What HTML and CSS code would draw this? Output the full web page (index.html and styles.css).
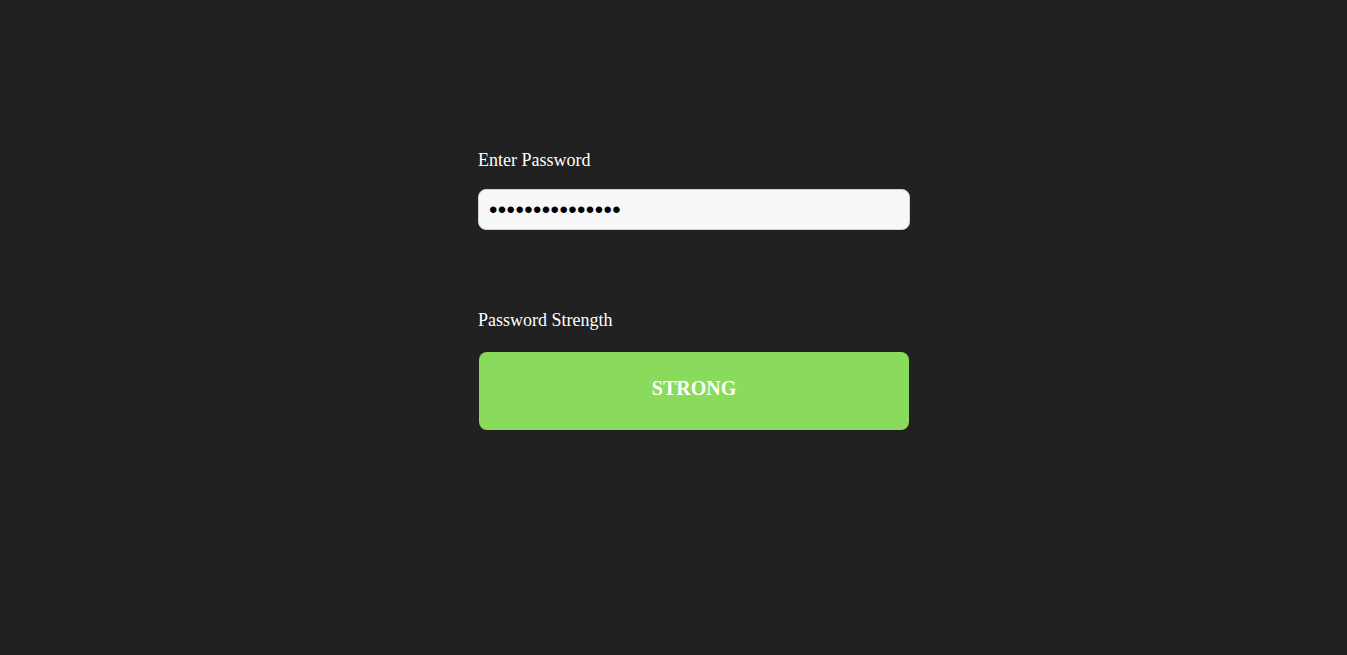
FILE: index.html
```html
<!DOCTYPE html>
<html>
<head>
<meta charset="utf-8">
<link rel="stylesheet" href="styles.css">
</head>
<body>
<main class="form">
  <label class="label" for="pw">Enter Password</label>
  <input class="input" id="pw" type="password" value="abcdefghijklmno">
  <div class="label label-strength">Password Strength</div>
  <div class="strength">STRONG</div>
</main>
</body>
</html>
```
FILE: styles.css
```css
html, body {
  margin: 0;
  padding: 0;
  background: #212121;
  height: 100%;
}
body {
  font-family: "Liberation Serif", "Times New Roman", serif;
  color: #ffffff;
}
.form {
  display: flex;
  flex-direction: column;
  width: 432px;
  margin-left: 478px;
  padding-top: 150px;
}
.label {
  display: block;
  font-size: 18px;
  line-height: 20px;
}
.input {
  margin-top: 19px;
  box-sizing: border-box;
  width: 432px;
  height: 41px;
  padding: 0 10px;
  border: 1px solid #d0d0d0;
  border-radius: 8px;
  background: #f7f7f7;
  color: #000;
  font-size: 24px;
  letter-spacing: 0.4px;
  font-family: "Liberation Sans", Arial, sans-serif;
  outline: none;
}
.label-strength {
  margin-top: 80px;
}
.strength {
  margin: 22px 1px 0;
  height: 78px;
  box-sizing: border-box;
  padding-top: 25px;
  border-radius: 8px;
  background: #8adb5c;
  text-align: center;
  font-weight: bold;
  font-size: 20px;
  line-height: 23px;
  color: #ffffff;
}
```
